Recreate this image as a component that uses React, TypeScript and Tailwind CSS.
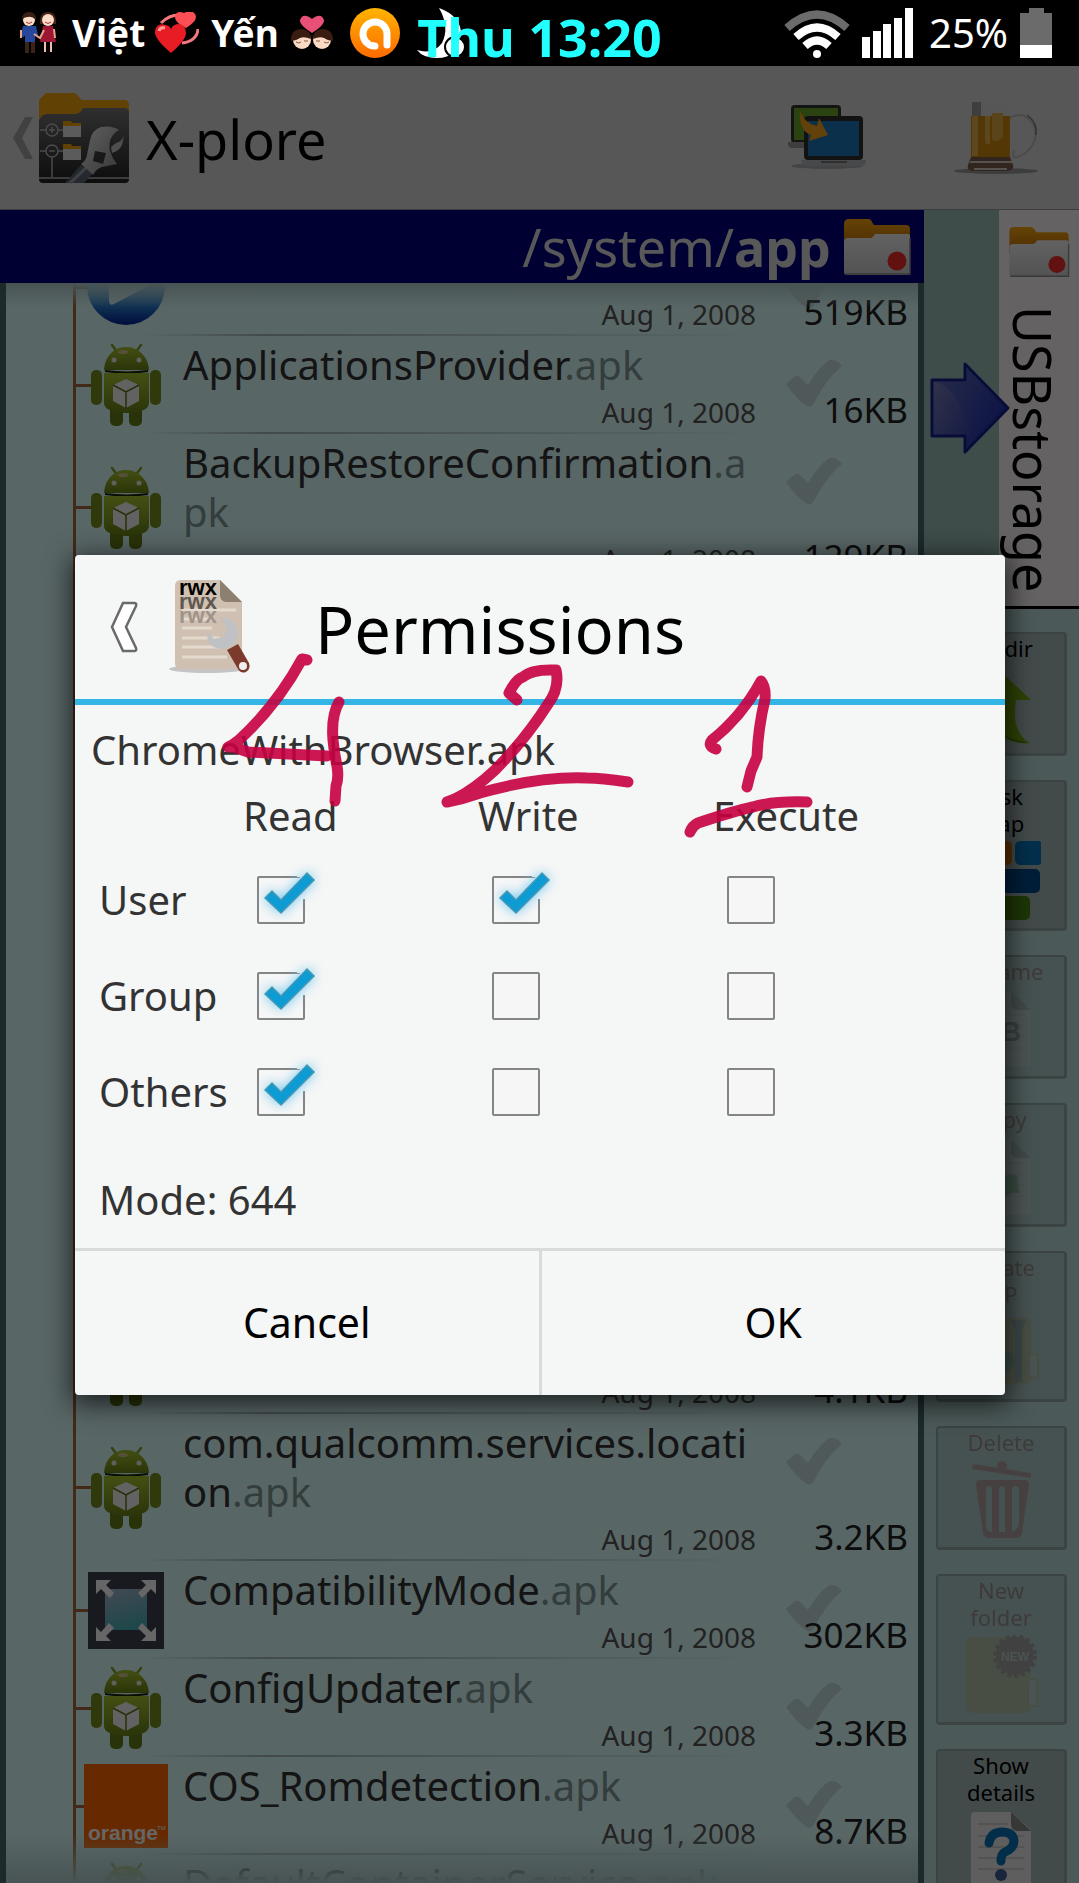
import { useState, type ReactNode } from "react";

type Perm = "Read" | "Write" | "Execute";
type Who = "User" | "Group" | "Others";

interface FileEntry {
  name: string;
  ext: string;
  size: string;
  icon: ReactNode;
  checkable?: boolean;
}

interface SideAction {
  label: string[];
  icon: ReactNode;
  disabled?: boolean;
}

const PERMS: Perm[] = ["Read", "Write", "Execute"];
const WHO: Who[] = ["User", "Group", "Others"];
const WEIGHT: Record<Perm, number> = { Read: 4, Write: 2, Execute: 1 };

function AndroidIcon() {
  return (
    <svg viewBox="0 0 84 84" className="size-[84px]">
      <defs>
        <linearGradient id="bot" x1="0" y1="0" x2="0" y2="1">
          <stop offset="0" stopColor="#a8c62f" />
          <stop offset="1" stopColor="#6a8418" />
        </linearGradient>
      </defs>
      <g stroke="#85a228" strokeWidth="2.5" strokeLinecap="round">
        <path d="M28 2l6 8M57 2l-6 8" />
      </g>
      <rect x="26" y="62" width="13" height="21" rx="5" fill="#667f17" />
      <rect x="45" y="62" width="13" height="21" rx="5" fill="#667f17" />
      <path d="M20 27C21 12 31 4 42 4s22 8 23 23z" fill="url(#bot)" />
      <path d="M21 28q22 3 43 0" stroke="#1b2604" strokeWidth="2" fill="none" />
      <path d="M20 30h45v30q0 9-22 10q-23-1-23-10z" fill="url(#bot)" />
      <rect x="7" y="27" width="11" height="35" rx="5" fill="#75901c" />
      <rect x="66" y="27" width="11" height="35" rx="5" fill="#75901c" />
      <ellipse cx="39" cy="9" rx="5" ry="2" fill="#d5c98a" />
      <circle cx="30" cy="17" r="2.5" fill="#eee" />
      <circle cx="55" cy="17" r="2.5" fill="#eee" />
      <path d="M42 36l13 6v16l-13 7-13-7V42z" fill="#f4f4f4" />
      <path d="M29 42l13 7 13-7M42 49v16" stroke="#5c7418" strokeWidth="1.5" fill="none" />
    </svg>
  );
}

function PlayIcon() {
  return (
    <svg viewBox="0 0 84 84" className="size-[84px]">
      <defs>
        <linearGradient id="play" x1="0" y1="0" x2="0" y2="1">
          <stop offset="0.4" stopColor="#8fd0f5" />
          <stop offset="0.75" stopColor="#2d80d0" />
          <stop offset="1" stopColor="#002299" />
        </linearGradient>
      </defs>
      <circle cx="42" cy="41" r="39" fill="url(#play)" />
      <path d="M25 14v43q1 4 5 2l42-22z" fill="#d9f6fb" />
    </svg>
  );
}

function CompatIcon() {
  return (
    <svg viewBox="0 0 84 84" className="size-[84px]">
      <defs>
        <linearGradient id="screen" x1="0" y1="0" x2="0.3" y2="1">
          <stop offset="0" stopColor="#a9b6cf" />
          <stop offset="1" stopColor="#4eb4bd" />
        </linearGradient>
      </defs>
      <rect x="4" y="4" width="76" height="77" fill="#40424f" />
      <rect x="21" y="21" width="42" height="41" fill="url(#screen)" />
      <g fill="#fff">
        <path d="M12 12h15l-5 5 8 8-4 5-9-9-5 5z" />
        <path d="M72 12v14l-5-5-9 9-4-5 8-8-5-5z" />
        <path d="M12 73V59l5 5 8-9 5 5-8 8 5 5z" />
        <path d="M72 73H57l5-5-8-8 4-5 9 9 5-5z" />
      </g>
    </svg>
  );
}

function OrangeIcon() {
  return (
    <svg viewBox="0 0 84 84" className="size-[84px]">
      <rect width="84" height="84" fill="#ff6600" />
      <text x="4" y="76" fontSize="21" fontWeight="700" fill="#fff" fontFamily="Liberation Sans, sans-serif">orange</text>
      <text x="73" y="66" fontSize="6" fill="#fff" fontFamily="Liberation Sans, sans-serif">TM</text>
    </svg>
  );
}

function FolderIcon({ className }: { className: string }) {
  return (
    <svg viewBox="0 0 68 58" className={className}>
      <defs>
        <linearGradient id="fold" x1="0" y1="0" x2="0" y2="1">
          <stop offset="0" stopColor="#fba80f" />
          <stop offset="1" stopColor="#c06a0a" />
        </linearGradient>
        <linearGradient id="sheet" x1="0" y1="0" x2="0" y2="1">
          <stop offset="0" stopColor="#f6f4f6" />
          <stop offset="1" stopColor="#cfcdd0" />
        </linearGradient>
      </defs>
      <path d="M1 6q0-5 5-5h19q3 0 4 3l2 3h32q4 0 4 4v20H1z" fill="url(#fold)" />
      <path d="M1 24q0-4 4-4h22q3 0 5-4h33q2 0 2 3v35q0 3-3 3H4q-3 0-3-3z" fill="url(#sheet)" />
      <path d="M2 56h65V20" stroke="#8f8f8f" strokeWidth="1.5" fill="none" />
      <circle cx="54" cy="43" r="9.5" fill="#f52c2c" />
    </svg>
  );
}

function XploreIcon() {
  return (
    <svg viewBox="0 0 92 92" className="size-[92px]">
      <defs>
        <linearGradient id="xp" x1="0" y1="0" x2="0" y2="1">
          <stop offset="0" stopColor="#767676" />
          <stop offset="0.6" stopColor="#424242" />
          <stop offset="1" stopColor="#222" />
        </linearGradient>
        <linearGradient id="steel" x1="0" y1="0" x2="1" y2="1">
          <stop offset="0" stopColor="#f2f2f2" />
          <stop offset="1" stopColor="#8a8a8a" />
        </linearGradient>
      </defs>
      <path d="M1 8L8 1h29l7 7h42q5 0 5 5v30H1z" fill="#f2a40c" />
      <path d="M1 28q3-6 8-6h28q5 0 8-6h41q5 0 5 5v66q0 4-4 4H5q-4 0-4-4z" fill="url(#xp)" />
      <g stroke="#b8b8b8" strokeWidth="1.5" fill="none">
        <circle cx="14" cy="38" r="6" />
        <circle cx="14" cy="59" r="6" />
        <path d="M2 38h6M20 38h5M2 59h6M20 59h5M14 65v20M11 38h6M14 35v6M11 59h6M1 86h90" />
      </g>
      <path d="M25 29h8l1 2h9v5H25zM25 52h8l1 2h9v5H25z" fill="#f2a40c" />
      <path d="M25 34h18v11H25zM25 57h18v11H25z" fill="#e4e4e4" />
      <path d="M43 73l11 9-8 9H27z" fill="#5c6876" />
      <path d="M32 91l16-15" stroke="#98a4b0" strokeWidth="3" />
      <path d="M81 38q-7-5-18-3q-9 3-11 13l-3 15q-1 6-6 9l12 11q3-6 9-8l15-3q-5-6-7-13q-3-14 9-21z" fill="url(#steel)" />
      <path d="M74 61q7-2 10-8l2-9q-3 6-8 7l-5 4z" fill="#c4c4c4" />
      <path d="M57 59l11 2-3 11-10-3z" fill="#3c3c3c" />
    </svg>
  );
}

function LaptopsIcon() {
  return (
    <svg viewBox="0 0 80 68" className="h-[68px] w-[80px]">
      <ellipse cx="40" cy="62" rx="36" ry="3" fill="#aaa" />
      <rect x="4" y="1" width="50" height="38" rx="4" fill="#333" />
      <rect x="7" y="4" width="44" height="32" fill="#6ca82c" />
      <path d="M1 38h30v6H5q-3 0-4-3z" fill="#9b9b9b" />
      <rect x="17" y="12" width="59" height="44" rx="4" fill="#2f2f2f" />
      <rect x="21" y="17" width="51" height="35" fill="#1c78bd" />
      <path d="M14 56h65q0 6-5 6H20q-5 0-6-6z" fill="#b4b7ba" />
      <path d="M34 57h26v2H34z" fill="#777" />
      <path d="M13 7q5 13 17 15l2-8 9 17-19 6 2-6Q12 27 13 7z" fill="#f6a21c" />
    </svg>
  );
}

function BeerIcon() {
  return (
    <svg viewBox="0 0 86 74" className="h-[74px] w-[86px]">
      <ellipse cx="43" cy="70" rx="42" ry="3" fill="#9a9a9a" />
      <path d="M57 17q14-9 24 8q6 18-12 29q-6 4-9 1l1-6" fill="none" stroke="#bcbcbc" strokeWidth="2" />
      <path d="M74 14q11 8 9 20" fill="none" stroke="#7d7d7d" strokeWidth="1.5" />
      <path d="M18 1h39v15H18z" fill="#d6d6d6" />
      <path d="M19 1h9v14h-9z" fill="#a09a98" />
      <path d="M18 15h39v41H18z" fill="#cf890e" />
      <path d="M19 15h6v40h-6zM32 15h5v28q-4 2-5-4z" fill="#e9b24c" />
      <path d="M39 12h11v24q-6 6-11 3z" fill="#e2ac42" />
      <path d="M18 56h39l3 8q2 5-6 6H22q-9 0-7-6z" fill="#7d5d4a" />
      <path d="M17 61h42M21 68h33" stroke="#d5ccc6" strokeWidth="2" />
    </svg>
  );
}

function UpDirIcon() {
  return (
    <svg viewBox="0 0 80 80" className="size-20">
      <path d="M35 1l35 33H55q-5 33 14 43-24 2-35-14-8-12-6-29H6z" fill="#74a80f" />
      <path d="M34 63q14 14 33 14-20-3-33-14z" fill="#2b7a1c" />
    </svg>
  );
}

function DiskMapIcon() {
  return (
    <svg viewBox="0 0 80 80" className="size-20">
      <rect x="2" y="0" width="24" height="24" rx="5" fill="#c03a2a" />
      <rect x="28" y="0" width="23" height="24" rx="5" fill="#d97008" />
      <rect x="54" y="0" width="28" height="24" rx="5" fill="#0b77bd" />
      <rect x="10" y="28" width="69" height="24" rx="5" fill="#034b90" />
      <rect x="20" y="55" width="49" height="24" rx="5" fill="#49880f" />
    </svg>
  );
}

function PageIcon({ children }: { children?: ReactNode }) {
  return (
    <svg viewBox="0 0 80 80" className="size-20">
      <path d="M10 6q0-4 4-4h36l20 18v54q0 4-4 4H14q-4 0-4-4z" fill="#ececec" />
      <path d="M50 2v12q0 7 7 7h13z" fill="#8a8a8a" />
      <path d="M17 14h30M17 26h46M17 37h46M17 48h46M17 59h46" stroke="#cfcfcf" strokeWidth="2" />
      {children}
    </svg>
  );
}

function ZipIcon() {
  return (
    <svg viewBox="0 0 80 80" className="size-20">
      <rect x="6" y="6" width="64" height="66" rx="5" fill="#c9a545" />
      <rect x="68" y="42" width="9" height="24" rx="3" fill="#ddd" stroke="#c9a545" strokeWidth="2" />
      <path d="M50 8h15l-4 10v52h-7V18z" fill="#5b6674" />
      <path d="M18 56q20-22 34-14l2 10-16 16z" fill="#3c9a3c" />
    </svg>
  );
}

function TrashIcon() {
  return (
    <svg viewBox="0 0 80 80" className="size-20">
      <g fill="#b4302c">
        <circle cx="41" cy="6" r="5" />
        <path d="M12 4l58 9v5L11 9z" />
        <path fillRule="evenodd" d="M18 20h46q4 0 4 5l-7 48q-1 5-6 5H28q-5 0-6-5l-7-48q0-5 3-5zM25 28v36q0 8 6 8V28q-3-4-6 0zM38 28v44h6V28q-3-4-6 0zM51 28v44q6-2 7-10V28q-4-4-7 0z" />
      </g>
    </svg>
  );
}

function NewFolderIcon() {
  return (
    <svg viewBox="0 0 80 80" className="size-20">
      <rect x="5" y="2" width="64" height="76" rx="6" fill="#c9aa4c" />
      <rect x="67" y="44" width="9" height="27" rx="2" fill="#e8e8e8" stroke="#c9aa4c" strokeWidth="2" />
      <circle cx="54" cy="21" r="19" fill="#8a2830" />
      <circle cx="54" cy="21" r="20" fill="none" stroke="#8a2830" strokeWidth="4" strokeDasharray="4 3" />
      <text x="54" y="26" textAnchor="middle" fontSize="12" fontWeight="700" fill="#ddd" fontFamily="Liberation Sans, sans-serif">NEW</text>
    </svg>
  );
}

const ACTIONS: SideAction[] = [
  { label: ["Up dir"], icon: <UpDirIcon /> },
  { label: ["Disk", "map"], icon: <DiskMapIcon /> },
  {
    label: ["Rename"],
    disabled: true,
    icon: (
      <PageIcon>
        <text x="40" y="52" fontSize="28" fontWeight="700" fill="#333" fontFamily="Liberation Sans, sans-serif">B</text>
      </PageIcon>
    ),
  },
  { label: ["Copy"], disabled: true, icon: <PageIcon><path d="M22 62q14-28 34-24l2 18h-8L34 68z" fill="#3c9a3c" /></PageIcon> },
  { label: ["Create", "ZIP"], disabled: true, icon: <ZipIcon /> },
  { label: ["Delete"], disabled: true, icon: <TrashIcon /> },
  { label: ["New", "folder"], disabled: true, icon: <NewFolderIcon /> },
  {
    label: ["Show", "details"],
    icon: (
      <PageIcon>
        <path d="M28 33q2-11 13-11t12 9q0 7-9 11-4 2-4 9" stroke="#0873b8" strokeWidth="9" strokeLinecap="round" fill="none" />
        <circle cx="40" cy="65" r="6" fill="#3d5f9a" />
      </PageIcon>
    ),
  },
];

const TOP_FILES: FileEntry[] = [
  { name: "", ext: "", size: "519KB", icon: <PlayIcon />, checkable: true },
  { name: "ApplicationsProvider", ext: ".apk", size: "16KB", icon: <AndroidIcon />, checkable: true },
  { name: "BackupRestoreConfirmation", ext: ".apk", size: "129KB", icon: <AndroidIcon />, checkable: true },
];

const BOTTOM_FILES: FileEntry[] = [
  { name: "", ext: "", size: "4.1KB", icon: <AndroidIcon /> },
  { name: "com.qualcomm.services.location", ext: ".apk", size: "3.2KB", icon: <AndroidIcon />, checkable: true },
  { name: "CompatibilityMode", ext: ".apk", size: "302KB", icon: <CompatIcon />, checkable: true },
  { name: "ConfigUpdater", ext: ".apk", size: "3.3KB", icon: <AndroidIcon />, checkable: true },
  { name: "COS_Romdetection", ext: ".apk", size: "8.7KB", icon: <OrangeIcon />, checkable: true },
  { name: "DefaultContainerService", ext: ".apk", size: "", icon: <AndroidIcon /> },
];

function FileRow({ file }: { file: FileEntry }) {
  return (
    <li className="flex">
      <div className="-mr-2 h-[3px] w-4 shrink-0 self-center bg-[#a96a3c]" />
      <div className="relative shrink-0 self-center">{file.icon}</div>
      <div className="ml-[15px] flex min-w-0 flex-1 flex-col pt-1">
        <div className="min-h-[49px] text-[40px] leading-[49px] break-all text-[#333]">
          {file.name}
          <span className="text-[#829998]">{file.ext}</span>
        </div>
        <div className="h-[43px] pr-1 text-right text-[28px] leading-[47px] text-[#555]">
          {file.size && "Aug 1, 2008"}
        </div>
        <div className="-ml-10 h-[2px] bg-linear-to-r from-transparent via-[#a5baba] via-20% to-transparent" />
      </div>
      <div className="relative flex w-[158px] shrink-0 flex-col justify-end pr-[10px] text-right text-[35px] leading-[49px] text-[#222]">
        {file.checkable && (
          <svg viewBox="0 0 56 48" className="absolute top-[23px] left-[26px] h-12 w-14">
            <path d="M0 25l9-8q3-1 5 1l8 8Q34 6 44 1q8-1 12 6Q40 20 28 44q-3 5-7 3Q10 40 0 25z" fill="#c8dfde" />
          </svg>
        )}
        <span className="relative">{file.size}</span>
      </div>
    </li>
  );
}

function StatusBar() {
  return (
    <header className="relative flex h-[66px] shrink-0 items-center bg-black pr-[27px] pl-5 text-white">
      <svg viewBox="0 0 36 42" className="h-[42px] w-9">
        <path d="M5 27h10v14h-4V30h-2v11H5z" fill="#3b2417" />
        <path d="M3 14h13l2 9-3 1v6H5v-6l-5 2z" fill="#27479c" />
        <circle cx="9" cy="8" r="6" fill="#fbdcc8" />
        <path d="M2 8q0-8 7-8t7 8q-4-4-8-3-4 0-6 3z" fill="#3a2014" />
        <path d="M24 28h2v12h-2zM30 28h2v12h-2z" fill="#f1bfa5" />
        <path d="M20 12q-1-12 8-12t8 12z" fill="#4b2418" />
        <circle cx="28" cy="8" r="6" fill="#fbdcc8" />
        <path d="M23 14h10l3 16H20z" fill="#9d1734" />
        <path d="M14 22l6 4 4-8M1 18v8M34 17l1 9" stroke="#e5a78a" strokeWidth="2" fill="none" />
        <path d="M6 10q3 3 6 0M25 10q3 3 6 0" stroke="#a33" fill="none" />
      </svg>
      <span className="ml-4 text-[37px] leading-[48px] font-bold">Việt</span>
      <svg viewBox="0 0 44 42" className="ml-[10px] h-[42px] w-11">
        <path d="M6 11q8-8 18-8M43 17q-1 12-16 14" stroke="#f3797f" strokeWidth="3" fill="none" />
        <path d="M31 16q-12-6-11-12 2-6 9-3 7-4 11 1 4 6-9 14z" fill="#fb4e55" />
        <path d="M16 41Q-1 27 0 19q2-9 11-6 4 1 5 4 2-5 8-5 7 1 7 9 0 7-15 20z" fill="#e81c24" />
        <path d="M4 19q1-4 6-3" stroke="#ff9a9a" strokeWidth="3" fill="none" />
      </svg>
      <span className="ml-3 text-[37px] leading-[48px] font-bold">Yến</span>
      <svg viewBox="0 0 42 36" className="ml-3 h-9 w-[42px]">
        <path d="M21 18Q8 10 9 5q3-8 12-1 9-7 12 1 1 5-12 13z" fill="#e85077" />
        <circle cx="11" cy="25" r="9" fill="#fbd9c4" />
        <circle cx="31" cy="25" r="9" fill="#fbd9c4" />
        <path d="M0 26q-1-11 10-12 10 0 10 10-7-3-11-1-4 3-9 3zM42 26q1-11-10-12-10 0-10 10 7-3 11-1 4 3 9 3z" fill="#3a1c10" />
        <path d="M5 27q3 2 5 0M33 27q3 2 5 0M13 26h4M25 26h4" stroke="#8a5a40" fill="none" />
      </svg>
      <svg viewBox="0 0 50 50" className="ml-[17px] size-[50px]">
        <defs>
          <linearGradient id="avast" x1="0" y1="0" x2="0" y2="1">
            <stop offset="0" stopColor="#ffb400" />
            <stop offset="1" stopColor="#ff6a00" />
          </linearGradient>
        </defs>
        <circle cx="25" cy="25" r="25" fill="url(#avast)" />
        <path d="M37 37V26a12 12 0 1 0-12 12" fill="none" stroke="#fff" strokeWidth="7" strokeLinecap="round" />
        <path d="M25 22q-7 4-3 12" stroke="#ff8a00" strokeWidth="2" fill="none" />
      </svg>
      <svg viewBox="0 0 50 50" className="ml-[17px] size-[50px]">
        <path d="M22 0q22 8 22 26-2 24-24 24Q6 50 0 42q16 5 25-7 8-16-3-35z" fill="#fff" />
        <circle cx="38" cy="39" r="10" fill="#fff" stroke="#000" strokeWidth="2" />
      </svg>

      <div className="absolute inset-x-0 top-2 text-center text-[52px] leading-[58px] font-bold text-[#22ffff]">
        Thu 13:20
      </div>

      <svg viewBox="0 0 66 50" className="ml-auto h-[50px] w-[66px]">
        <g fill="none" strokeWidth="8">
          <path d="M3 20q30-27 60 0" stroke="#6b6b6b" />
          <path d="M12 29q21-19 42 0" stroke="#fff" />
          <path d="M21 38q12-11 24 0" stroke="#fff" />
        </g>
        <circle cx="33" cy="46" r="4" fill="#fff" />
      </svg>
      <svg viewBox="0 0 51 50" className="ml-3 h-[50px] w-[51px]" fill="#fff">
        <path d="M0 29h8v21H0zM11 23h8v27h-8zM21 16h8v34h-8zM32 10h8v40h-8zM43 0h8v50h-8z" />
      </svg>
      <span className="ml-4 text-[40px] leading-[48px]">25%</span>
      <svg viewBox="0 0 32 50" className="ml-3 h-[50px] w-8">
        <path d="M0 5h9V0h15v5h8v33H0z" fill="#6b6b6b" />
        <path d="M0 37h32v13H0z" fill="#fff" />
      </svg>
    </header>
  );
}

function TitleBar() {
  return (
    <div className="flex h-36 shrink-0 items-center border-b border-[#999] bg-[#dadada] pr-10 pl-3">
      <svg viewBox="0 0 22 42" className="h-[42px] w-[22px]">
        <path d="M13 0h8L10 21l11 21h-8L1 21z" fill="#a4a4a4" />
      </svg>
      <div className="ml-1"><XploreIcon /></div>
      <h1 className="ml-4 pt-[2px] text-[54px] leading-[64px] text-black">X-plore</h1>
      <button type="button" aria-label="Switch pane" className="ml-auto"><LaptopsIcon /></button>
      <button type="button" aria-label="Donate" className="ml-[86px]"><BeerIcon /></button>
    </div>
  );
}

function Sidebar() {
  return (
    <aside className="flex w-[155px] shrink-0 flex-col bg-[#bbdedc]">
      <div className="relative flex justify-end border-b-[3px] border-black bg-[#9bc0ba]">
        <div className="flex h-[396px] w-20 flex-col items-center bg-[#fbf5f8] pt-4">
          <FolderIcon className="h-[52px] w-[62px]" />
          <span className="mt-[28px] mr-3 text-[52px] leading-[56px] text-black [writing-mode:vertical-rl]">USBstorage</span>
        </div>
        <svg viewBox="0 0 80 92" className="absolute top-[152px] left-[6px] h-[92px] w-20">
          <defs>
            <linearGradient id="go" x1="0" y1="0" x2="1" y2="0.6">
              <stop offset="0" stopColor="#8488b8" />
              <stop offset="1" stopColor="#1a2ba8" />
            </linearGradient>
          </defs>
          <path d="M2 18h33V2l43 44-43 44V74H2z" fill="url(#go)" stroke="#142090" strokeWidth="3" strokeLinejoin="round" />
          <path d="M3 19q26 5 39 55l32-28L36 6v14z" fill="#2e43b8" opacity="0.35" />
        </svg>
      </div>
      <div className="flex flex-col gap-6 px-3 pt-[23px]">
        {ACTIONS.map((a) => (
          <button
            key={a.label.join(" ")}
            type="button"
            disabled={a.disabled}
            className="flex flex-col items-center rounded-[4px] border-t-2 border-r-3 border-b-3 border-l-2 border-[#94a9a7] bg-[#a9bbb9] pt-[1px] pb-[7px] text-[22px] leading-[27px] text-black disabled:bg-[#aeccca] disabled:text-[#8a6a6a]"
          >
            {a.label.map((line) => (
              <span key={line} className={a.disabled ? "opacity-60" : ""}>{line}</span>
            ))}
            <span className={a.disabled ? "pt-1 opacity-25" : "pt-1"}>{a.icon}</span>
          </button>
        ))}
      </div>
    </aside>
  );
}

function PermCheckbox({ id, label, checked, onChange }: { id: string; label: string; checked: boolean; onChange: () => void }) {
  return (
    <div className="relative ml-[14px] size-12">
      <input
        id={id}
        type="checkbox"
        aria-label={label}
        checked={checked}
        onChange={onChange}
        className="block size-12 appearance-none rounded-[2px] border-2 border-[#848484] bg-[#f6f6f6]"
      />
      {checked && (
        <svg viewBox="0 0 72 64" className="pointer-events-none absolute -top-3 left-0 h-16 w-[72px]">
          <path d="M40 10h10v22h-4M46 12v18" stroke="#f6f6f6" strokeWidth="6" fill="none" />
          <g className="drop-shadow-[0_0_6px_#6cc8f0]">
            <path d="M8 34l7-7 9 9L50 9l7 7-33 33z" fill="#0c9bd2" stroke="#4a97b4" strokeWidth="1.5" />
          </g>
        </svg>
      )}
    </div>
  );
}

function PermissionsDialog() {
  const [grid, setGrid] = useState<Record<string, boolean>>({
    "User-Read": true,
    "User-Write": true,
    "Group-Read": true,
    "Others-Read": true,
  });

  const mode = WHO.map((w) => PERMS.reduce((sum, p) => sum + (grid[`${w}-${p}`] ? WEIGHT[p] : 0), 0)).join("");

  return (
    <div role="dialog" aria-label="Permissions" className="relative w-full rounded-[4px] bg-[#f5f6f6] shadow-[0_6px_26px_4px_rgba(0,0,0,0.65)]">
      <div className="flex h-[150px] items-center border-b-6 border-[#33b5e5] pl-[34px]">
        <button type="button" aria-label="Back">
          <svg viewBox="0 0 30 52" className="h-[52px] w-[30px]">
            <path d="M14 2h11q3 0 2 3L17 26l10 21q1 3-2 3H14L3 26z" fill="#fff" stroke="#6a6a6a" strokeWidth="2.5" />
          </svg>
        </button>
        <svg viewBox="0 0 84 96" className="ml-7 h-24 w-[84px]">
          <ellipse cx="40" cy="90" rx="38" ry="4" fill="#c4c4c4" />
          <path d="M8 7q0-6 6-6h39l22 22v61q0 6-6 6H14q-6 0-6-6z" fill="#cfc0b2" />
          <path d="M53 1v16q1 6 7 6h15z" fill="#8e8070" />
          <path d="M15 31h54M15 40h30M15 49h30M15 59h38M15 68h38M15 78h45" stroke="#e4d9cd" strokeWidth="3" />
          <g fontFamily="Liberation Sans, sans-serif" fontSize="22" fontWeight="700">
            <text x="12" y="16" fill="#000">rwx</text>
            <text x="12" y="30" fill="#5f574f">rwx</text>
            <text x="12" y="44" fill="#a0948a">rwx</text>
          </g>
          <path d="M60 71l11-6 11 19q2 6-3 9-5 2-8-3z" fill="#7c3a2c" />
          <circle cx="76" cy="87" r="4" fill="#eee" />
          <path d="M54 38q16 2 17 17-1 14-17 15-15-2-14-18l7 8 10-2 3-9z" fill="#bfc1c4" />
        </svg>
        <h2 className="ml-16 pt-1 text-[65px] leading-[80px] text-black">Permissions</h2>
      </div>

      <div className="h-[543px] pt-[17px] text-[40px] leading-[56px] text-[#333]">
        <p className="pl-4">ChromeWithBrowser.apk</p>
        <table className="mt-[10px] w-full table-fixed border-collapse text-left">
          <thead>
            <tr className="h-16 align-top">
              <th className="w-[168px]" />
              {PERMS.map((p) => (
                <th key={p} scope="col" className="w-[235px] font-normal">{p}</th>
              ))}
              <th />
            </tr>
          </thead>
          <tbody>
            {WHO.map((w) => (
              <tr key={w} className="h-24">
                <th scope="row" className="pl-6 font-normal">{w}</th>
                {PERMS.map((p) => {
                  const key = `${w}-${p}`;
                  return (
                    <td key={p}>
                      <PermCheckbox
                        id={key}
                        label={`${w} ${p}`}
                        checked={!!grid[key]}
                        onChange={() => setGrid((g) => ({ ...g, [key]: !g[key] }))}
                      />
                    </td>
                  );
                })}
                <td />
              </tr>
            ))}
          </tbody>
        </table>
        <p className="mt-8 pl-6">Mode: {mode}</p>
      </div>

      <div className="flex h-[147px] border-t-3 border-[#d9dada] text-[41px] text-black">
        <button type="button" className="flex-1">Cancel</button>
        <button type="button" className="flex-1 border-l-3 border-[#d9dada]">OK</button>
      </div>

      {/* hand-drawn octal weights above each column */}
      <svg viewBox="0 0 930 840" className="pointer-events-none absolute top-0 left-0 h-[840px] w-[930px]" fill="none" stroke="#c60040" strokeOpacity="0.9" strokeWidth="11" strokeLinecap="round" strokeLinejoin="round">
        <path d="M232 105l-5-1Q202 150 164 185q-6 5-11 7h6l14 5 79 4" />
        <path d="M264 147q-8 14-6 38 1 12 4 26 2 12-1 20l-1 15" />
        <path d="M442 145l-8-7q7-14 14-16 9-8 32-7h1q4 18-8 34Q450 185 420 215 400 234 380 244l-8 3q16-3 33-9 60-17 107-15 14 0 41 4" />
        <path d="M641 194q-9-3-4-9 30-24 49-59 5 6 4 18-7 30-8 58l-6 14-4 16" />
        <path d="M615 277q2-6 8-9 36-12 55-16 20-6 54-5" />
      </svg>
    </div>
  );
}

export default function App() {
  return (
    <div className="flex h-screen flex-col overflow-hidden bg-black font-['Noto_Sans',sans-serif]">
      <StatusBar />
      <div className="relative flex min-h-0 flex-1 flex-col">
        <TitleBar />
        <div className="flex min-h-0 flex-1">
          <main className="flex min-w-0 flex-1 flex-col">
            <div className="flex h-[73px] shrink-0 items-center justify-end bg-[#000080] pr-[13px] text-[52px] text-[#ddd]">
              <span>/system/<b>app</b></span>
              <FolderIcon className="ml-3 h-[58px] w-[68px]" />
            </div>
            <div className="relative min-h-0 flex-1 overflow-hidden border-x-6 border-[#466969] bg-[#dfffff] pl-[67px]">
              <ul className="-mt-[45px] border-l-3 border-[#a96a3c]">
                {TOP_FILES.map((f) => <FileRow key={f.size} file={f} />)}
                <li aria-hidden="true" className="h-[735px]" />
                {BOTTOM_FILES.map((f) => <FileRow key={f.size} file={f} />)}
              </ul>
              <div className="absolute inset-x-0 top-0 h-6 bg-linear-to-b from-[#b4d2d2] to-transparent" />
              <div className="absolute inset-x-0 bottom-0 h-12 bg-linear-to-t from-[#b4d2d2] to-transparent" />
            </div>
          </main>
          <Sidebar />
        </div>

        <div className="absolute inset-0 flex items-center bg-black/60 pr-[74px] pl-[75px]">
          <PermissionsDialog />
        </div>
      </div>
    </div>
  );
}
